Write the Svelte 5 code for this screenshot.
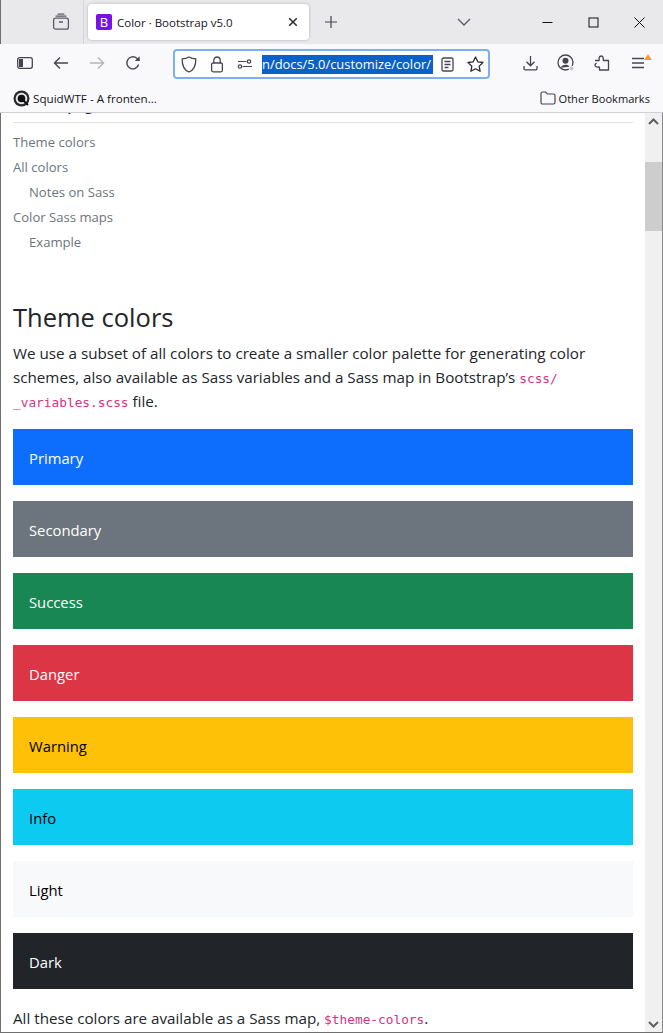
<script>
  const toc = [
    { label: "Theme colors", sub: false },
    { label: "All colors", sub: false },
    { label: "Notes on Sass", sub: true },
    { label: "Color Sass maps", sub: false },
    { label: "Example", sub: true },
  ];

  const swatches = [
    { name: "Primary", bg: "#0d6efd", fg: "#fff" },
    { name: "Secondary", bg: "#6c757d", fg: "#fff" },
    { name: "Success", bg: "#198754", fg: "#fff" },
    { name: "Danger", bg: "#dc3545", fg: "#fff" },
    { name: "Warning", bg: "#ffc107", fg: "#000" },
    { name: "Info", bg: "#0dcaf0", fg: "#000" },
    { name: "Light", bg: "#f8f9fa", fg: "#000" },
    { name: "Dark", bg: "#212529", fg: "#fff" },
  ];
</script>

<div class="window">
  <header class="tabbar">
    <span class="view-btn">
      <svg width="18" height="18" viewBox="0 0 18 18" fill="none" stroke="#5b5b66" stroke-width="1.3">
        <rect x="1.6" y="5.2" width="14.8" height="11" rx="2" />
        <path d="M3.6 3.2h10.8M5.6 1.2h6.8M7 9h4" />
      </svg>
    </span>
    <span class="tab-sep"></span>
    <div class="tab">
      <span class="favicon">B</span>
      <span class="tab-title">Color · Bootstrap v5.0</span>
      <svg class="tab-close" width="10" height="10" viewBox="0 0 10 10" stroke="#2b2a33" stroke-width="1.5">
        <path d="M1.2 1.2l7.6 7.6M8.8 1.2l-7.6 7.6" />
      </svg>
    </div>
    <svg class="new-tab" width="14" height="14" viewBox="0 0 14 14" stroke="#45454f" stroke-width="1.2">
      <path d="M7 1v12M1 7h12" />
    </svg>
    <svg class="tab-list" width="14" height="8" viewBox="0 0 14 8" fill="none" stroke="#5b5b66" stroke-width="1.3">
      <path d="M1 1l6 6 6-6" />
    </svg>
    <div class="win-controls">
      <span class="win-btn"><svg width="11" height="11" viewBox="0 0 11 11" stroke="#111" stroke-width="1"><path d="M0.5 5.5h10" /></svg></span>
      <span class="win-btn"><svg width="11" height="11" viewBox="0 0 11 11" fill="none" stroke="#111" stroke-width="1"><rect x="1" y="1" width="9" height="9" /></svg></span>
      <span class="win-btn"><svg width="11" height="11" viewBox="0 0 11 11" stroke="#111" stroke-width="1"><path d="M0.5 0.5l10 10M10.5 0.5l-10 10" /></svg></span>
    </div>
  </header>

  <div class="toolbar">
    <div class="nav-btns">
      <span class="tool">
        <svg width="16" height="14" viewBox="0 0 16 14" fill="none" stroke="#45454f" stroke-width="1.3">
          <rect x="0.7" y="1.7" width="14.6" height="10.6" rx="2" />
          <path d="M2 3h4v8H2z" fill="#45454f" stroke="none" />
        </svg>
      </span>
      <span class="tool">
        <svg width="16" height="14" viewBox="0 0 16 14" fill="none" stroke="#45454f" stroke-width="1.4">
          <path d="M15 7H1.5M7 1.5L1.5 7 7 12.5" />
        </svg>
      </span>
      <span class="tool">
        <svg width="16" height="14" viewBox="0 0 16 14" fill="none" stroke="#b5b5ba" stroke-width="1.4">
          <path d="M1 7h13.5M9 1.5L14.5 7 9 12.5" />
        </svg>
      </span>
      <span class="tool">
        <svg width="16" height="16" viewBox="0 0 16 16" fill="none" stroke="#45454f" stroke-width="1.4">
          <path d="M13.6 9.5A6 6 0 1 1 11.8 3.3L14.4 5.6" />
          <path d="M14.6 1.2v4.8H9.8" fill="#45454f" stroke="none" />
        </svg>
      </span>
    </div>

    <div class="urlbar">
      <span class="url-icon">
        <svg width="16" height="17" viewBox="0 0 16 17" fill="none" stroke="#45454f" stroke-width="1.3">
          <path d="M8 1c2 1.2 4.3 1.8 6.8 1.9C15 9 13 13.800 8 16 3 13.800 1 9 1.200 2.900 3.700 2.800 6 2.200 8 1z" />
        </svg>
      </span>
      <span class="url-icon">
        <svg width="14" height="17" viewBox="0 0 14 17" fill="none" stroke="#45454f" stroke-width="1.3">
          <rect x="1.6" y="7" width="10.8" height="8.800" rx="1.500" />
          <path d="M3.800 7V4.200a3.200 3.200 0 0 1 6.400 0V7" />
        </svg>
      </span>
      <span class="url-icon">
        <svg width="16" height="10" viewBox="0 0 16 10" fill="none" stroke="#45454f" stroke-width="1.200">
          <circle cx="12" cy="2.500" r="1.700" />
          <circle cx="3" cy="7.500" r="1.700" />
          <path d="M1 2.500h8.500M5.500 7.500H15" />
        </svg>
      </span>
      <span class="url-text">n/docs/5.0/customize/color/</span>
      <span class="url-end">
        <svg width="13" height="15" viewBox="0 0 13 15" fill="none" stroke="#45454f" stroke-width="1.300">
          <rect x="1" y="1" width="11" height="13" rx="1.500" />
          <path d="M3.500 4.500h6M3.500 7.500h6M3.500 10.500h4" />
        </svg>
      </span>
      <span class="url-end">
        <svg width="17" height="16" viewBox="0 0 17 16" fill="none" stroke="#2b2a33" stroke-width="1.300" stroke-linejoin="round">
          <path d="M8.500 1l2.300 4.800 5.200.7-3.800 3.600.9 5.200-4.600-2.500-4.600 2.500.9-5.200L1 6.500l5.200-.7z" />
        </svg>
      </span>
    </div>

    <div class="right-btns">
      <span class="tool">
        <svg width="15" height="16" viewBox="0 0 15 16" fill="none" stroke="#45454f" stroke-width="1.300">
          <path d="M7.500 1v9.500M3.500 6.800l4 4 4-4M1 11v2.700c0 .7.500 1.100 1.100 1.100h10.800c.6 0 1.100-.4 1.100-1.100V11" />
        </svg>
      </span>
      <span class="tool">
        <svg width="18" height="18" viewBox="0 0 18 18" fill="none" stroke="#45454f" stroke-width="1.300">
          <circle cx="8.500" cy="8.500" r="7.500" />
          <circle cx="8.500" cy="6.800" r="3" fill="#45454f" stroke="none" />
          <path d="M3.600 13.800c.9-2 2.800-3 4.900-3s3 .5 4 2" fill="#45454f" stroke="none" />
          <circle cx="14.500" cy="14.500" r="2.500" fill="#c8c8cc" stroke="#f9f9fb" stroke-width="1" />
        </svg>
      </span>
      <span class="tool">
        <svg width="16" height="16" viewBox="0 0 16 16" fill="none" stroke="#45454f" stroke-width="1.300" stroke-linejoin="round">
          <path d="M1 5.500h3.500c.5 0 .8-.4.700-.9C5 3.800 5 1 7.200 1s2.200 2.800 2 3.600c-.1.500.2.900.7.900H14.500V15H5.500v-2.300c0-.5-.4-.8-.9-.7-.8.2-3.600.2-3.600-2 0-1 .8-1.700 1.700-1.700" />
        </svg>
      </span>
      <span class="tool menu">
        <svg width="14" height="12" viewBox="0 0 14 12" stroke="#45454f" stroke-width="1.300">
          <path d="M1 1.500h12M1 6h12M1 10.500h12" />
        </svg>
        <span class="menu-badge"></span>
      </span>
    </div>
  </div>

  <nav class="bookmarks">
    <span class="bookmark">
      <svg width="17" height="17" viewBox="0 0 17 17">
        <circle cx="8.500" cy="8.500" r="8" fill="#2b2b2f" />
        <circle cx="8.500" cy="8.500" r="5.800" fill="#e8e8ea" />
        <circle cx="8.500" cy="8.500" r="3.800" fill="#111" />
        <path d="M10 10l5 5" stroke="#111" stroke-width="2" />
      </svg>
      SquidWTF - A fronten...
    </span>
    <span class="bookmark other">
      <svg width="16" height="14" viewBox="0 0 16 14" fill="none" stroke="#45454f" stroke-width="1.200">
        <path d="M1 2.500c0-.9.600-1.500 1.500-1.500h3l2 2h6c.9 0 1.500.6 1.500 1.500v7c0 .9-.6 1.500-1.500 1.500h-11C1.600 13 1 12.400 1 11.500z" />
      </svg>
      Other Bookmarks
    </span>
  </nav>

  <div class="viewport">
    <main class="page">
      <div class="page-scrolled">
        <p class="toc-title">On this page</p>
        <ul class="toc">
          {#each toc as item}
            <li class:sub={item.sub}>{item.label}</li>
          {/each}
        </ul>

        <h2>Theme colors</h2>
        <p class="lead-text">
          We use a subset of all colors to create a smaller color palette for generating color schemes, also available as Sass variables and a Sass map in Bootstrap’s <code>scss/<br />_variables.scss</code> file.
        </p>

        <div class="swatches">
          {#each swatches as s}
            <div class="swatch" style="background: {s.bg}; color: {s.fg}">{s.name}</div>
          {/each}
        </div>

        <p class="after">All these colors are available as a Sass map, <code>$theme-colors</code>.</p>
      </div>
    </main>

    <div class="scrollbar">
      <svg width="11" height="7" viewBox="0 0 11 7" fill="none" stroke="#606060" stroke-width="2"><path d="M1 6l4.500-4.500L10 6" /></svg>
      <div class="track"><div class="thumb"></div></div>
      <svg width="11" height="7" viewBox="0 0 11 7" fill="none" stroke="#606060" stroke-width="2"><path d="M1 1l4.500 4.500L10 1" /></svg>
    </div>
  </div>
</div>

<style>
  :global(body) {
    margin: 0;
    background: #fff;
  }

  .window {
    width: 663px;
    height: 1033px;
    display: flex;
    flex-direction: column;
    overflow: hidden;
    font-family: "Open Sans", "Noto Sans", sans-serif;
    color: #15141a;
  }

  .tabbar {
    height: 44px;
    flex: none;
    display: flex;
    align-items: center;
    background: #e9e9eb;
    box-sizing: border-box;
    border-left: 1px solid #6f6f6f;
  }

  .view-btn {
    width: 18px;
    height: 18px;
    margin-left: 51px;
  }

  .tab-sep {
    width: 1px;
    height: 44px;
    margin-left: 13px;
    background: #d4d4d8;
  }

  .tab {
    width: 221px;
    height: 36px;
    box-sizing: border-box;
    margin-left: 4px;
    padding: 0 11px 0 8px;
    display: flex;
    align-items: center;
    background: #fff;
    border-radius: 4px;
    box-shadow: 0 0 3px rgba(0, 0, 0, 0.25);
  }

  .favicon {
    width: 16px;
    height: 16px;
    border-radius: 2px;
    background: #7a12e6;
    color: #fff;
    font-size: 13px;
    line-height: 16px;
    text-align: center;
  }

  .tab-title {
    flex: 1;
    margin-left: 5px;
    font-size: 11.5px;
    white-space: nowrap;
  }

  .new-tab {
    margin-left: 15px;
  }

  .tab-list {
    margin-left: 119px;
  }

  .win-controls {
    margin-left: 71px;
    display: flex;
    gap: 35px;
  }

  .win-btn {
    width: 11px;
    height: 11px;
    display: flex;
  }

  .toolbar {
    height: 38px;
    flex: none;
    display: flex;
    align-items: center;
    background: #f9f9fb;
  }

  .nav-btns {
    width: 173px;
    flex: none;
    display: flex;
    padding-left: 7px;
    box-sizing: border-box;
  }

  .tool {
    width: 36px;
    height: 24px;
    flex: none;
    display: flex;
    align-items: center;
    justify-content: center;
    position: relative;
  }

  .urlbar {
    width: 317px;
    height: 30px;
    box-sizing: border-box;
    margin-top: 2px;
    display: flex;
    align-items: center;
    background: #fff;
    border: 2px solid #7db0ee;
    border-radius: 4px;
  }

  .url-icon {
    width: 28px;
    flex: none;
    display: flex;
    justify-content: center;
  }

  .url-text {
    margin-left: 3px;
    width: 171px;
    flex: none;
    height: 19px;
    overflow: hidden;
    background: #0a62c9;
    color: #fff;
    font-size: 12.900px;
    line-height: 19px;
    white-space: nowrap;
  }

  .url-end {
    width: 28px;
    flex: none;
    display: flex;
    justify-content: center;
  }

  .right-btns {
    margin-left: 22px;
    display: flex;
  }

  .menu-badge {
    position: absolute;
    top: 3px;
    right: 4px;
    border-left: 4px solid transparent;
    border-right: 4px solid transparent;
    border-bottom: 6px solid #ff9b2e;
  }

  .bookmarks {
    height: 31px;
    flex: none;
    display: flex;
    align-items: center;
    justify-content: space-between;
    box-sizing: border-box;
    padding: 2px 13px 0 13px;
    background: #f9f9fb;
    border-bottom: 1px solid #cfcfd8;
    font-size: 11.650px;
  }

  .bookmark {
    display: flex;
    align-items: center;
    gap: 3px;
    white-space: nowrap;
  }

  .bookmark.other {
    font-size: 11.100px;
  }

  .viewport {
    flex: 1;
    min-height: 0;
    display: flex;
    background: #fff;
    border-left: 1px solid #6f6f6f;
    border-right: 1px solid #8a8a8a;
    border-bottom: 1px solid #6f6f6f;
  }

  .page {
    flex: 1;
    min-width: 0;
    overflow: hidden;
    color: #212529;
  }

  /* page is scrolled a bit, "On this page" is cut at the top */
  .page-scrolled {
    margin-top: -17px;
    padding: 0 12px;
  }

  .toc-title {
    margin: 0;
    height: 27px;
    box-sizing: border-box;
    border-bottom: 1px solid #dee2e6;
    font-size: 14.500px;
    font-weight: 600;
    line-height: 19px;
    color: #212529;
  }

  .toc {
    list-style: none;
    margin: 0;
    padding: 7px 0 0;
  }

  .toc li {
    height: 25px;
    font-size: 13.100px;
    line-height: 25px;
    color: #6c757d;
  }

  .toc li.sub {
    padding-left: 16px;
  }

  h2 {
    margin: 43px 0 0;
    font-size: 25.500px;
    font-weight: 400;
    line-height: 38px;
  }

  .lead-text {
    margin: 5px 0 0;
    font-size: 15.200px;
    line-height: 24px;
  }

  code {
    font-family: "DejaVu Sans Mono", monospace;
    font-size: 12.800px;
    line-height: 1;
    color: #d63384;
  }

  .swatches {
    margin-top: 16px;
    display: flex;
    flex-direction: column;
    gap: 16px;
  }

  .swatch {
    height: 56px;
    box-sizing: border-box;
    display: flex;
    align-items: center;
    padding: 2px 0 0 16px;
    font-size: 14.800px;
  }

  .after {
    margin: 17px 0 0;
    font-size: 15.200px;
    line-height: 24px;
  }

  .scrollbar {
    width: 17px;
    flex: none;
    display: flex;
    flex-direction: column;
    align-items: center;
    background: #f0f0f0;
    padding: 5px 0 4px;
    box-sizing: border-box;
  }

  .track {
    flex: 1;
    width: 100%;
    padding-top: 37px;
    box-sizing: border-box;
  }

  .thumb {
    height: 69px;
    background: #cdcdcd;
  }
</style>
